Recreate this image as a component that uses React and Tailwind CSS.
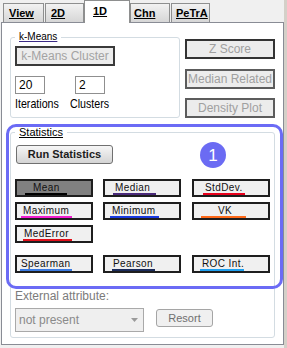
const tabs = [
  { label: 'View', w: 'w-[41px]', pl: 'pl-[5px]', ml: '' },
  { label: '2D', w: 'w-[39px]', pl: 'pl-[5px]', ml: 'ml-[1px]' },
  { label: '1D', w: 'w-[46px]', pl: 'pl-[8px]', ml: '', active: true },
  { label: 'Chn', w: 'w-[40px]', pl: 'pl-[3px]', ml: '' },
  { label: 'PeTrA', w: 'w-[39px]', pl: 'pl-[4px]', ml: 'ml-[1px]' },
];

// u: underline start (from button edge), w: underline width, t: text offset inside underline
const rows = [
  [
    { label: 'Mean', u: 8, w: 42, t: 8, color: '#000000', selected: true },
    { label: 'Median', u: 8, w: 43, t: 2, color: '#4a2a7a' },
    { label: 'StdDev.', u: 9, w: 42, t: 2, color: '#e8001c' },
  ],
  [
    { label: 'Maximum', u: 4, w: 51, t: 2, color: '#f020d0' },
    { label: 'Minimum', u: 5, w: 49, t: 2, color: '#1a3adf' },
    { label: 'VK', u: 7, w: 45, t: 17, color: '#ff6a1a' },
  ],
  [{ label: 'MedError', u: 6, w: 49, t: 1, color: '#e0101a' }],
];

const lastRow = [
  { label: 'Spearman', u: 3, w: 52, t: 1, color: '#3a7ae0' },
  { label: 'Pearson', u: 7, w: 43, t: 1, color: '#1a2b5a' },
  { label: 'ROC Int.', u: 6, w: 44, t: 2, color: '#1fa0ef' },
];

function Tab({ label, w, pl, ml, active }) {
  if (active) {
    return (
      <div
        className={`${w} ${ml} ${pl} h-[23px] -mb-[1px] relative z-10 bg-white border border-b-0 border-[#8e8f8f] pt-[4px] text-[11px] leading-[13px] font-bold underline`}
      >
        {label}
      </div>
    );
  }
  return (
    <div
      className={`${w} ${ml} ${pl} h-[19px] border border-b-0 border-[#8e8f8f] bg-linear-to-b from-[#f2f2f2] to-[#d6d6d6] pt-[3px] text-[11px] leading-[13px] font-bold underline`}
    >
      {label}
    </div>
  );
}

function StatButton({ item, extra = '' }) {
  return (
    <div
      className={`w-[78px] h-[18px] border-2 border-[#1e1e1e] flex items-start ${
        item.selected ? 'bg-[#808080]' : 'bg-[#f0f0f0]'
      } ${extra}`}
    >
      <span
        className="block h-[14px] pt-[1px] border-b-2 text-[10px] leading-[11px] tracking-[0.4px] text-[#111] whitespace-nowrap"
        style={{ marginLeft: item.u, width: item.w, paddingLeft: item.t, borderColor: item.color }}
      >
        {item.label}
      </span>
    </div>
  );
}

function GrayButton({ children, border, extra = '' }) {
  return (
    <div
      className={`w-[90px] h-[20px] border-2 ${border} bg-[#ececec] flex items-center justify-center text-[12px] text-[#a0a0a0] ${extra}`}
    >
      {children}
    </div>
  );
}

export default function App() {
  return (
    <div className="w-[287px] h-[348px] bg-[#d4d0c8] font-['Liberation_Sans',Arial,sans-serif] text-black overflow-hidden">
      <div className="w-[284px] h-[348px] bg-[#f0f0f0] pl-[1px]">
        <div className="h-[22px] flex items-end pl-[2px]">
          {tabs.map((t) => (
            <Tab key={t.label} {...t} />
          ))}
        </div>

        <div className="relative w-[283px] h-[323px] bg-white border border-[#898c95]">
          {/* top section */}
          <div className="flex items-start">
            <fieldset className="ml-[8px] mt-[8px] w-[170px] border border-[#d3dce2] rounded-[3px] pl-[4px] pb-[6px]">
              <legend className="px-[4px] text-[10px] leading-[12px] underline decoration-[#3b2a86]">
                k-Means
              </legend>
              <div className="mt-[3px] w-[100px] h-[20px] border-2 border-[#3a3a3a] bg-[#ececec] flex items-center justify-center text-[12px] text-[#a3a3a3]">
                k-Means Cluster
              </div>
              <div className="mt-[10px] flex gap-[30px]">
                <div className="w-[30px] h-[18px] border border-[#8f8f8f] pl-[3px] text-[12px] leading-[16px]">20</div>
                <div className="w-[30px] h-[18px] border border-[#8f8f8f] pl-[3px] text-[12px] leading-[16px]">2</div>
              </div>
              <div className="mt-[3px] flex text-[13px] leading-[14px]">
                <span className="w-[55px]">
                  <span className="inline-block origin-left scale-x-[0.82]">Iterations</span>
                </span>
                <span className="inline-block origin-left scale-x-[0.82]">Clusters</span>
              </div>
            </fieldset>

            <div className="ml-[5px] mt-[16px] flex flex-col">
              <GrayButton border="border-[#333333]">Z Score</GrayButton>
              <GrayButton border="border-[#5c5c5c]" extra="mt-[10px]">Median Related</GrayButton>
              <GrayButton border="border-[#5c5c5c]" extra="mt-[9px]">Density Plot</GrayButton>
            </div>
          </div>

          {/* statistics */}
          <fieldset className="ml-[8px] mt-[8px] w-[265px] border border-[#d3dce2] rounded-[3px] pl-[4px] pb-[5px]">
            <legend className="px-[4px] text-[11px] leading-[12px] underline">Statistics</legend>
            <div className="ml-[1px] mt-[7px] w-[97px] h-[19px] border border-[#707070] rounded-[3px] bg-linear-to-b from-[#f6f6f6] to-[#d4d4d4] flex items-center justify-center text-[11px] font-bold text-[#1c1c1c]">
              Run Statistics
            </div>

            <div className="mt-[15px] flex flex-col gap-[5px]">
              {rows.map((row, i) => (
                <div key={i} className="flex gap-[10px]">
                  {row.map((item, j) => (
                    <StatButton key={item.label} item={item} extra={j === 2 ? 'ml-[1px]' : ''} />
                  ))}
                </div>
              ))}
              <div className="mt-[7px] flex gap-[10px]">
                {lastRow.map((item, j) => (
                  <StatButton key={item.label} item={item} extra={j === 2 ? 'ml-[1px]' : ''} />
                ))}
              </div>
            </div>

            <div className="mt-[16px] text-[12px] leading-[14px] text-[#7b7b7b]">External attribute:</div>
            <div className="mt-[5px] flex items-start">
              <div className="w-[129px] h-[24px] border border-[#a9a9a9] bg-[#efefef] flex items-center pl-[3px] text-[12px] text-[#8a8a8a]">
                not present
                <svg className="ml-auto mr-[5px]" width="7" height="4" viewBox="0 0 7 4">
                  <polygon points="0,0 7,0 3.5,4" fill="#9a9a9a" />
                </svg>
              </div>
              <div className="ml-[12px] mt-[1px] w-[57px] h-[18px] border border-[#a5a5a5] rounded-[3px] bg-[#f0f0f0] flex items-center justify-center text-[11px] text-[#6f6f6f]">
                Resort
              </div>
            </div>
          </fieldset>

          {/* highlight overlay */}
          <div className="absolute left-[4px] top-[101px] w-[277px] h-[165px] border-[3px] border-[#6b6bf5] rounded-[10px] pointer-events-none" />
          <div className="absolute left-[198px] top-[119px] w-[26px] h-[26px] rounded-full bg-[#6b6bf3] flex items-center justify-center text-white text-[17px] leading-none">
            1
          </div>
        </div>
      </div>
    </div>
  );
}
